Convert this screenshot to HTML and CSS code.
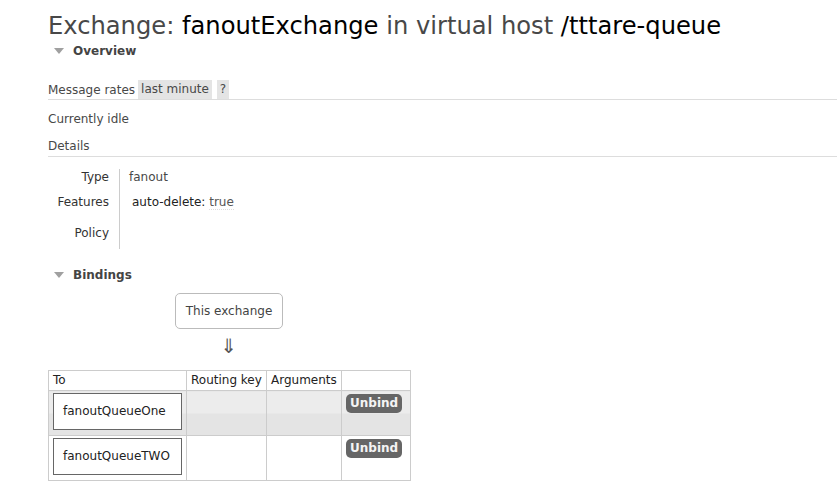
FILE: index.html
```html
<!DOCTYPE html>
<html>
<head>
<meta charset="utf-8">
<link rel="stylesheet" href="styles.css">
</head>
<body>
<div class="main">
  <h1><span class="dim">Exchange:</span> fanoutExchange <span class="dim">in virtual host</span> /tttare-queue</h1>
  <h2 class="section"><span class="tri"></span>Overview</h2>
  <div class="rates">
    <span class="lbl">Message rates</span>
    <span class="pill">last minute</span>
    <span class="pill q">?</span>
  </div>
  <div class="idle">Currently idle</div>
  <div class="details-h">Details</div>
  <div class="facts">
    <div class="k">Type</div><div class="v">fanout</div>
    <div class="k">Features</div><div class="v feat">auto-delete: <span class="t">true</span></div>
    <div class="k pol">Policy</div><div class="v pol"></div>
  </div>
  <h2 class="section bind"><span class="tri"></span>Bindings</h2>
  <div class="diagram">
    <div class="this">This exchange</div>
    <div class="arrow">⇓</div>
  </div>
  <table class="bindings">
    <thead>
      <tr><th class="c1">To</th><th class="c2">Routing key</th><th class="c3">Arguments</th><th class="c4"></th></tr>
    </thead>
    <tbody>
      <tr class="alt"><td><div class="q-box">fanoutQueueOne</div></td><td></td><td></td><td class="act"><span class="btn">Unbind</span></td></tr>
      <tr><td><div class="q-box">fanoutQueueTWO</div></td><td></td><td></td><td class="act"><span class="btn">Unbind</span></td></tr>
    </tbody>
  </table>
</div>
</body>
</html>
```
FILE: styles.css
```css
html, body { margin: 0; padding: 0; background: #fff; }
body {
  font-family: "DejaVu Sans", Verdana, sans-serif;
  font-size: 12px;
  color: #484848;
}
.main { padding-left: 48px; }
h1 {
  margin: 12px 0 0;
  font-size: 24.2px;
  line-height: 28px;
  font-weight: normal;
  color: #000;
  white-space: nowrap;
}
h1 .dim { color: #484848; }
.section {
  margin: 3px 0 0;
  font-size: 12px;
  line-height: 16px;
  font-weight: bold;
  color: #444;
  display: flex;
  align-items: center;
}
.tri {
  display: inline-block;
  width: 0; height: 0;
  border-left: 5px solid transparent;
  border-right: 5px solid transparent;
  border-top: 6px solid #a0a0a0;
  margin: 0 9px 0 6px;
}
.rates {
  margin-top: 21px;
  display: flex;
  align-items: center;
  border-bottom: 1px solid #ddd;
  height: 19px;
}
.rates .lbl { margin-right: 3px; }
.pill {
  background: #e4e4e4;
  height: 19px;
  line-height: 19px;
  padding: 0 3px;
  margin-right: 5px;
}
.idle { margin-top: 11px; line-height: 16px; }
.details-h {
  margin-top: 11px;
  line-height: 16px;
  padding-bottom: 2px;
  border-bottom: 1px solid #ddd;
}
.facts {
  margin-top: 12px;
  display: grid;
  grid-template-columns: 72px auto;
  grid-auto-rows: 25px;
}
.facts .k {
  text-align: right;
  padding-right: 10px;
  line-height: 16px;
  border-right: 1px solid #ccc;
  color: #333;
}
.facts .v { padding-left: 9px; line-height: 16px; }
.facts .feat { padding-left: 12px; color: #222; }
.facts .feat .t { color: #555; border-bottom: 1px dotted #ddd; }
.facts .pol { padding-top: 6px; height: 24px; }
.bind { margin-top: 23px; }
.diagram {
  width: 362px;
  display: flex;
  flex-direction: column;
  align-items: center;
  margin-top: 10px;
}
.this {
  border: 1px solid #bbb;
  border-radius: 5px;
  padding: 0 10px;
  height: 34px;
  line-height: 34px;
  color: #444;
}
.arrow {
  margin-top: 7px;
  font-size: 20px;
  line-height: 20px;
  color: #555;
}
.bindings {
  margin-top: 14px;
  border-collapse: collapse;
  border: 1px solid #ccc;
  width: 363px;
}
.bindings th, .bindings td {
  border: 1px solid #ccc;
  padding: 0;
  vertical-align: top;
}
.bindings th {
  font-weight: normal;
  text-align: left;
  padding: 1px 4px;
  height: 17px;
  line-height: 17px;
  color: #222;
}
.bindings .c1 { width: 129px; }
.bindings .c2 { width: 71px; }
.bindings .c3 { width: 66px; }
.bindings tr.alt td { background: linear-gradient(#ececec 50%, #e4e4e4 50%); }
.q-box {
  margin: 2px 4px 5px;
  border: 1px solid #666;
  background: #fff;
  height: 35px;
  line-height: 35px;
  padding-left: 9px;
  color: #222;
}
.act { padding: 3px 0 0 4px !important; }
.btn {
  display: inline-block;
  background: #666;
  color: #f4f4f4;
  font-weight: bold;
  border-radius: 5px;
  padding: 0 4px;
  height: 19px;
  line-height: 19px;
}
```
